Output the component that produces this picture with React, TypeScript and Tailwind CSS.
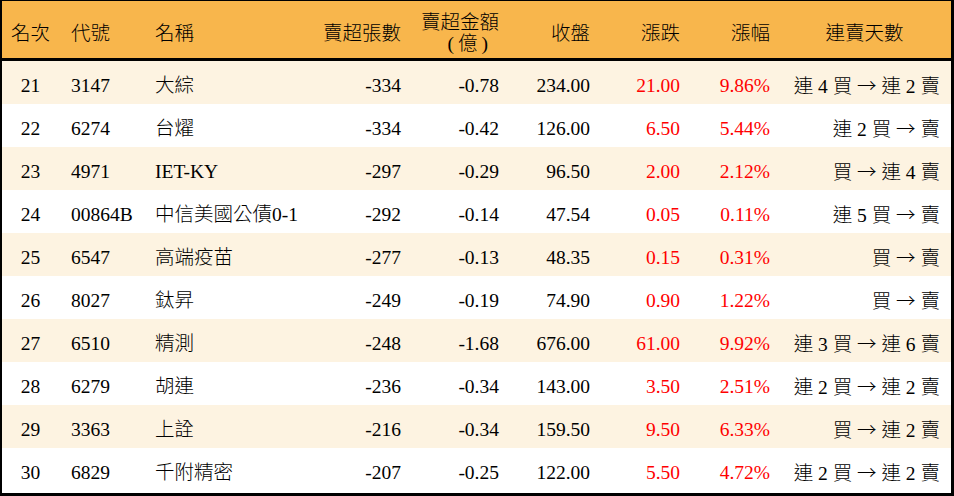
const rows = [
  { rank: 21, code: "3147", name: "大綜", qty: "-334", amt: "-0.78", close: "234.00", chg: "21.00", pct: "9.86%", streak: "連 4 買 → 連 2 賣" },
  { rank: 22, code: "6274", name: "台燿", qty: "-334", amt: "-0.42", close: "126.00", chg: "6.50", pct: "5.44%", streak: "連 2 買 → 賣" },
  { rank: 23, code: "4971", name: "IET-KY", qty: "-297", amt: "-0.29", close: "96.50", chg: "2.00", pct: "2.12%", streak: "買 → 連 4 賣" },
  { rank: 24, code: "00864B", name: "中信美國公債0-1", qty: "-292", amt: "-0.14", close: "47.54", chg: "0.05", pct: "0.11%", streak: "連 5 買 → 賣" },
  { rank: 25, code: "6547", name: "高端疫苗", qty: "-277", amt: "-0.13", close: "48.35", chg: "0.15", pct: "0.31%", streak: "買 → 賣" },
  { rank: 26, code: "8027", name: "鈦昇", qty: "-249", amt: "-0.19", close: "74.90", chg: "0.90", pct: "1.22%", streak: "買 → 賣" },
  { rank: 27, code: "6510", name: "精測", qty: "-248", amt: "-1.68", close: "676.00", chg: "61.00", pct: "9.92%", streak: "連 3 買 → 連 6 賣" },
  { rank: 28, code: "6279", name: "胡連", qty: "-236", amt: "-0.34", close: "143.00", chg: "3.50", pct: "2.51%", streak: "連 2 買 → 連 2 賣" },
  { rank: 29, code: "3363", name: "上詮", qty: "-216", amt: "-0.34", close: "159.50", chg: "9.50", pct: "6.33%", streak: "買 → 連 2 賣" },
  { rank: 30, code: "6829", name: "千附精密", qty: "-207", amt: "-0.25", close: "122.00", chg: "5.50", pct: "4.72%", streak: "連 2 買 → 連 2 賣" },
];

// column widths: rank | code | name | qty | amount | close | change | pct | streak
const cols = "grid grid-cols-[57px_90px_150px_110px_98px_91px_90px_90px_1fr]";

const Streak = ({ text }: { text: string }) => {
  const [from, to] = text.split(" → ");
  return (
    <>
      {from}{" "}
      <span className="font-['Noto_Sans_CJK_TC',sans-serif] font-light">→</span>
      {" "}{to}
    </>
  );
};

const App = () => {
  return (
    <div className="w-[954px] h-[496px] bg-white text-black border-t border-l-2 border-r-[3px] border-b-[3px] border-black text-[19.5px] leading-none font-light font-['Liberation_Serif','Noto_Sans_CJK_TC',serif]">
      {/* Header */}
      <div className={`${cols} h-[60px] pt-[8px] items-center bg-[#f8b64c] border-b-[3px] border-black`}>
        <div className="text-center">名次</div>
        <div className="pl-[12px]">代號</div>
        <div className="pl-[6px]">名稱</div>
        <div className="text-right pr-[8px]">賣超張數</div>
        <div className="text-right pr-[8px] leading-[21px] pb-[2px]">
          <div>賣超金額</div>
          <div className="pr-[11px]">
            (<span className="mx-[4px]">億</span>)
          </div>
        </div>
        <div className="text-right pr-[8px]">收盤</div>
        <div className="text-right pr-[8px]">漲跌</div>
        <div className="text-right pr-[8px]">漲幅</div>
        <div className="text-center">連賣天數</div>
      </div>

      {/* Rows */}
      {rows.map((r, i) => (
        <div
          key={r.rank}
          className={`${cols} h-[43px] pt-[7px] items-center ${i % 2 === 0 ? "bg-[#fdf3e1]" : "bg-white"}`}
        >
          <div className="text-center">{r.rank}</div>
          <div className="pl-[12px]">{r.code}</div>
          <div className="pl-[6px] whitespace-nowrap">{r.name}</div>
          <div className="text-right pr-[8px]">{r.qty}</div>
          <div className="text-right pr-[8px]">{r.amt}</div>
          <div className="text-right pr-[8px]">{r.close}</div>
          <div className="text-right pr-[8px] text-[#ff0000]">{r.chg}</div>
          <div className="text-right pr-[8px] text-[#ff0000]">{r.pct}</div>
          <div className="text-right pr-[11px] whitespace-pre">
            <Streak text={r.streak} />
          </div>
        </div>
      ))}
    </div>
  );
};

export default App;
